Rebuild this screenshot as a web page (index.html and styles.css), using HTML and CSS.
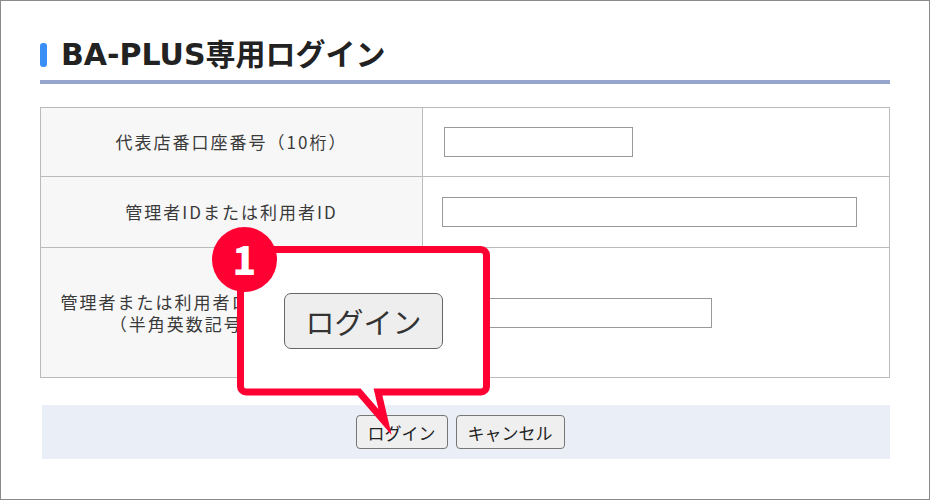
FILE: index.html
```html
<!DOCTYPE html>
<html lang="ja">
<head>
  <meta charset="UTF-8">
  <title>BA-PLUS専用ログイン</title>
  <link rel="stylesheet" href="styles.css">
</head>
<body>

  <div class="page">
    <h1 class="title">BA-PLUS専用ログイン</h1>

    <table class="login-table">
      <tr class="row-1">
        <th>代表店番口座番号（10桁）</th>
        <td><input type="text" class="input-short"></td>
      </tr>
      <tr class="row-2">
        <th>管理者IDまたは利用者ID</th>
        <td><input type="text" class="input-long"></td>
      </tr>
      <tr class="row-3">
        <th>管理者または利用者ログインパスワード<br>（半角英数記号6～20文字）</th>
        <td><input type="password" class="input-mid"></td>
      </tr>
    </table>

    <div class="buttons">
      <button class="btn">ログイン</button>
      <button class="btn">キャンセル</button>
    </div>

    <!-- callout pointing at the login button -->
    <div class="callout">
      <svg class="callout-frame" width="253" height="190" viewBox="0 0 253 190">
        <path d="M 9 3.5 H 244 A 5.5 5.5 0 0 1 249.5 9 V 140.5 A 5.5 5.5 0 0 1 244 146 H 141 L 148 176 L 122 146 H 9 A 5.5 5.5 0 0 1 3.5 140.5 V 9 A 5.5 5.5 0 0 1 9 3.5 Z"
              fill="#fff" stroke="#ff0033" stroke-width="7" stroke-linejoin="miter" stroke-miterlimit="6"/>
      </svg>
      <span class="badge">1</span>
      <button class="btn-big">ログイン</button>
    </div>
  </div>

</body>
</html>
```

FILE: styles.css
```css
body {
  margin: 0;
  font-family: "Noto Sans CJK JP", sans-serif;
  color: #333;
}
.page {
  position: relative;
  width: 930px;
  height: 500px;
  box-sizing: border-box;
  border: 1px solid #8a8a8a;
  padding: 33px 39px 0 39px;
  background: #fff;
}
.title {
  display: flex;
  align-items: center;
  margin: 0;
  padding-bottom: 4px;
  border-bottom: 4px solid #96a6cc;
  font-family: "DejaVu Sans", "Noto Sans CJK JP", sans-serif;
  font-size: 30px;
  font-weight: bold;
  line-height: 42px;
  color: #222;
}
.title::before {
  content: "";
  width: 7px;
  height: 24px;
  margin-right: 14px;
  border-radius: 3px;
  background: #3a8ff7;
}
.login-table {
  width: 850px;
  margin-top: 23px;
  border-collapse: collapse;
  table-layout: fixed;
}
.login-table th,
.login-table td {
  border: 1px solid #bbb;
  padding: 0;
}
.login-table th {
  width: 381px;
  background: #f7f7f7;
  font-weight: normal;
  font-size: 17px;
  letter-spacing: 2px;
  line-height: 22px;
  text-align: center;
  color: #3a3a3a;
}
.login-table td {
  padding-left: 19px;
}
.row-1 { height: 69px; }
.row-2 { height: 71px; }
.row-3 { height: 130px; }
.login-table input {
  display: block;
  height: 30px;
  box-sizing: border-box;
  border: 1px solid #999;
  border-radius: 0;
  padding: 0 4px;
}
.input-short {
  width: 189px;
  margin-left: 2px;
}
.input-long {
  width: 415px;
}
.input-mid {
  width: 270px;
}
.buttons {
  display: flex;
  justify-content: center;
  align-items: center;
  gap: 8px;
  width: 848px;
  height: 54px;
  margin: 27px 0 0 2px;
  padding-right: 12px;
  box-sizing: border-box;
  background: #e9eef7;
}
.btn {
  height: 34px;
  padding: 0 11px;
  border: 1px solid #767676;
  border-radius: 4px;
  background: #efefef;
  font-family: "Noto Sans CJK JP", sans-serif;
  font-size: 17px;
  color: #222;
}
.callout {
  position: absolute;
  left: 236px;
  top: 245px;
  width: 253px;
  height: 149px;
  display: flex;
  align-items: center;
  justify-content: center;
}
.callout-frame {
  position: absolute;
  left: 0;
  top: 0;
  overflow: visible;
}
.badge {
  position: absolute;
  left: -25px;
  top: -19px;
  width: 65px;
  height: 65px;
  border-radius: 50%;
  background: #ff0033;
  color: #fff;
  font-size: 39px;
  font-weight: 900;
  line-height: 63px;
  text-align: center;
}
.btn-big {
  position: relative;
  width: 159px;
  height: 56px;
  border: 1px solid #666;
  border-radius: 7px;
  background: #eee;
  font-family: "Noto Sans CJK JP", sans-serif;
  font-size: 29px;
  color: #333;
}
```
